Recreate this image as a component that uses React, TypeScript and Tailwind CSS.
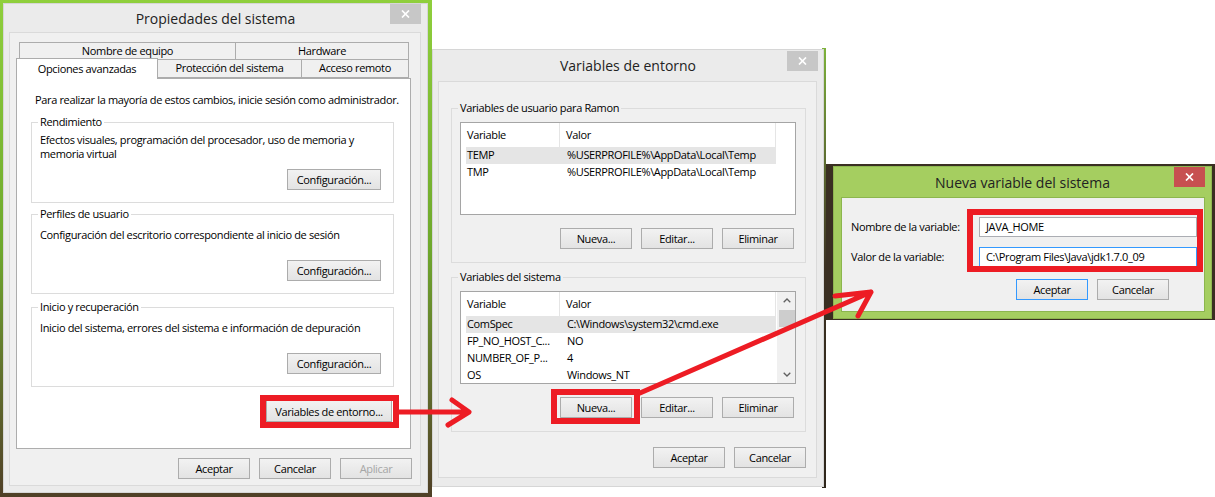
import React from "react";

type Kids = { children?: React.ReactNode };

function Btn({
  children,
  className = "",
  def = false,
  disabled = false,
}: Kids & { className?: string; def?: boolean; disabled?: boolean }) {
  return (
    <div
      className={`flex items-center justify-center border bg-linear-to-b from-[#f2f2f2] to-[#e3e3e3] text-[11px] leading-none ${
        def ? "border-[#3399ff]" : "border-[#acacac]"
      } ${disabled ? "text-[#a6a6a6]" : "text-black"} ${className}`}
    >
      {children}
    </div>
  );
}

function CloseX() {
  return (
    <svg width="9" height="8" viewBox="0 0 9 8">
      <path d="M1 0.5 L8 7.5 M8 0.5 L1 7.5" stroke="white" strokeWidth="1.7" />
    </svg>
  );
}

function Group({
  label,
  bg,
  className = "",
  children,
}: Kids & { label: string; bg: string; className?: string }) {
  return (
    <div className={`relative border border-[#dcdcdc] ${className}`}>
      <span className={`absolute left-[6px] top-[-9px] px-[2px] leading-[16px] ${bg}`}>{label}</span>
      {children}
    </div>
  );
}

function Chevron({ up }: { up?: boolean }) {
  return (
    <svg width="8" height="5" viewBox="0 0 8 5">
      <path
        d={up ? "M0.7 4.3 L4 1 L7.3 4.3" : "M0.7 0.7 L4 4 L7.3 0.7"}
        stroke="#606060"
        strokeWidth="1.3"
        fill="none"
      />
    </svg>
  );
}

function ListView({ rows, scroll = false }: { rows: [string, string][]; scroll?: boolean }) {
  return (
    <div className="flex h-[93px] w-[336px] overflow-hidden border border-[#a5a5a5] bg-white">
      <div className="flex-1 overflow-hidden">
        <div className="flex h-[24px] w-full">
          <div className="flex w-[99px] items-center border-r border-[#e5e5e5] pl-[6px]">Variable</div>
          <div className="flex w-[216px] items-center border-r border-[#e5e5e5] pl-[6px]">Valor</div>
        </div>
        {rows.map((r, i) => (
          <div
            key={r[0]}
            className={`ml-[5px] flex h-[17px] w-[310px] items-center whitespace-nowrap ${
              i === 0 ? "bg-[#e5e5e5]" : ""
            }`}
          >
            <span className="w-[101px] pl-[1px]">{r[0]}</span>
            <span>{r[1]}</span>
          </div>
        ))}
      </div>
      {scroll && (
        <div className="flex w-[18px] flex-col border-l border-[#f0f0f0] bg-[#f0f0f0]">
          <div className="flex h-[17px] items-center justify-center">
            <Chevron up />
          </div>
          <div className="ml-[1px] mt-px h-[17px] bg-[#cdcdcd]" />
          <div className="flex-1" />
          <div className="flex h-[17px] items-center justify-center">
            <Chevron />
          </div>
        </div>
      )}
    </div>
  );
}

function SystemProperties() {
  return (
    <div className="absolute left-[3px] top-[3px] flex h-[490px] w-[425px] flex-col border border-[#d6d6d6] bg-[#ebebeb]">
      <div className="relative flex h-[28px] shrink-0 items-center justify-center text-[14px] tracking-normal text-[#222]">
        Propiedades del sistema
        <div className="absolute right-[6px] top-0 flex h-[20px] w-[31px] items-center justify-center bg-[#c7c7c7]">
          <CloseX />
        </div>
      </div>
      <div className="mb-[6px] ml-[5px] mr-[6px] flex flex-1 flex-col border border-[#dadada] bg-[#f0f0f0]">
        <div className="ml-[6px] mt-[9px] w-[395px]">
          <div className="flex h-[18px] pl-[3px]">
            <div className="flex w-[217px] items-center justify-center border border-[#acacac] bg-[#f0f0f0]">
              Nombre de equipo
            </div>
            <div className="-ml-px flex w-[174px] items-center justify-center border border-[#acacac] bg-[#f0f0f0]">
              Hardware
            </div>
          </div>
          <div className="flex h-[18px] items-start">
            <div className="relative z-10 -mt-[2px] flex h-[21px] w-[142px] items-center justify-center border border-b-0 border-[#acacac] bg-white">
              Opciones avanzadas
            </div>
            <div className="-ml-px flex h-[18px] w-[145px] items-center justify-center border border-t-0 border-[#acacac] bg-[#f0f0f0]">
              Protección del sistema
            </div>
            <div className="-ml-px flex h-[18px] w-[108px] items-center justify-center border border-t-0 border-[#acacac] bg-[#f0f0f0]">
              Acceso remoto
            </div>
          </div>
          <div className="flex h-[371px] flex-col border border-[#adadad] bg-white">
            <div className="whitespace-nowrap pl-[18px] pt-[13px] leading-[15px]">
              Para realizar la mayoría de estos cambios, inicie sesión como administrador.
            </div>
            <Group label="Rendimiento" bg="bg-white" className="ml-[14px] mt-[15px] flex h-[81px] w-[363px] flex-col">
              <div className="pl-[8px] pt-[10px] leading-[14px]">
                Efectos visuales, programación del procesador, uso de memoria y
                <br />
                memoria virtual
              </div>
              <Btn className="mb-[12px] mr-[12px] mt-auto h-[21px] w-[94px] self-end">Configuración...</Btn>
            </Group>
            <Group label="Perfiles de usuario" bg="bg-white" className="ml-[14px] mt-[11px] flex h-[80px] w-[363px] flex-col">
              <div className="pl-[8px] pt-[12px] leading-[15px]">
                Configuración del escritorio correspondiente al inicio de sesión
              </div>
              <Btn className="mb-[12px] mr-[12px] mt-auto h-[21px] w-[94px] self-end">Configuración...</Btn>
            </Group>
            <Group label="Inicio y recuperación" bg="bg-white" className="ml-[14px] mt-[13px] flex h-[80px] w-[363px] flex-col">
              <div className="pl-[8px] pt-[12px] leading-[15px]">
                Inicio del sistema, errores del sistema e información de depuración
              </div>
              <Btn className="mb-[12px] mr-[12px] mt-auto h-[21px] w-[94px] self-end">Configuración...</Btn>
            </Group>
            <Btn className="mr-[18px] mt-[13px] h-[22px] w-[126px] self-end">Variables de entorno...</Btn>
          </div>
        </div>
        <div className="mr-[8px] mt-[9px] flex justify-end gap-[9px]">
          <Btn className="h-[21px] w-[72px]">Aceptar</Btn>
          <Btn className="h-[21px] w-[72px]">Cancelar</Btn>
          <Btn className="h-[21px] w-[72px]" disabled>
            Aplicar
          </Btn>
        </div>
      </div>
    </div>
  );
}

function EnvButtons() {
  return (
    <div className="mr-[2px] mt-[13px] flex justify-end gap-[9px]">
      <Btn className="h-[21px] w-[72px]">Nueva...</Btn>
      <Btn className="h-[21px] w-[72px]">Editar...</Btn>
      <Btn className="h-[21px] w-[72px]">Eliminar</Btn>
    </div>
  );
}

function EnvVariables() {
  return (
    <div className="absolute left-[432px] top-[49px] flex h-[438px] w-[392px] flex-col border border-[#d6d6d6] bg-[#ebebeb]">
      <div className="relative flex h-[31px] shrink-0 items-center justify-center text-[14px] tracking-normal text-[#222]">
        Variables de entorno
        <div className="absolute right-[5px] top-[1px] flex h-[20px] w-[31px] items-center justify-center bg-[#c7c7c7]">
          <CloseX />
        </div>
      </div>
      <div className="mb-[8px] ml-[5px] mr-[6px] flex flex-1 flex-col border border-[#dadada] bg-[#f0f0f0]">
        <Group
          label="Variables de usuario para Ramon"
          bg="bg-[#f0f0f0]"
          className="ml-[12px] mt-[26px] h-[155px] w-[355px] pl-[8px] pr-[9px] pt-[13px]"
        >
          <ListView
            rows={[
              ["TEMP", "%USERPROFILE%\\AppData\\Local\\Temp"],
              ["TMP", "%USERPROFILE%\\AppData\\Local\\Temp"],
            ]}
          />
          <EnvButtons />
        </Group>
        <Group
          label="Variables del sistema"
          bg="bg-[#f0f0f0]"
          className="ml-[12px] mt-[14px] h-[155px] w-[355px] pl-[8px] pr-[9px] pt-[13px]"
        >
          <ListView
            scroll
            rows={[
              ["ComSpec", "C:\\Windows\\system32\\cmd.exe"],
              ["FP_NO_HOST_C...", "NO"],
              ["NUMBER_OF_P...", "4"],
              ["OS", "Windows_NT"],
            ]}
          />
          <EnvButtons />
        </Group>
        <div className="mr-[10px] mt-[15px] flex justify-end gap-[9px]">
          <Btn className="h-[21px] w-[72px]">Aceptar</Btn>
          <Btn className="h-[21px] w-[72px]">Cancelar</Btn>
        </div>
      </div>
    </div>
  );
}

function NewVariable() {
  return (
    <div className="absolute left-[833px] top-[166px] flex h-[153px] w-[379px] flex-col border border-[#8fb650] bg-[#a5ce60]">
      <div className="relative flex h-[30px] shrink-0 items-center justify-center text-[14px] tracking-normal text-[#222]">
        Nueva variable del sistema
        <div className="absolute right-[6px] top-0 flex h-[20px] w-[31px] items-center justify-center bg-[#c75050]">
          <CloseX />
        </div>
      </div>
      <div className="mb-[6px] ml-[7px] mr-[6px] flex flex-1 flex-col border border-[#8cb64e] bg-[#f0f0f0] pl-[9px] pt-[19px]">
        <div className="flex h-[20px] items-center">
          <span className="w-[128px]">Nombre de la variable:</span>
          <div className="flex h-[20px] w-[218px] items-center border border-[#abadb3] bg-white pl-[6px]">JAVA_HOME</div>
        </div>
        <div className="mt-[10px] flex h-[20px] items-center">
          <span className="w-[128px]">Valor de la variable:</span>
          <div className="flex h-[20px] w-[218px] items-center border border-[#3399ff] bg-white pl-[6px]">
            C:\Program Files\Java\jdk1.7.0_09
          </div>
        </div>
        <div className="ml-[165px] mt-[12px] flex gap-[9px]">
          <Btn def className="h-[21px] w-[72px]">
            Aceptar
          </Btn>
          <Btn className="h-[21px] w-[72px]">Cancelar</Btn>
        </div>
      </div>
    </div>
  );
}

export default function App() {
  return (
    <div className="relative h-[497px] w-[1215px] overflow-hidden bg-white font-['Open_Sans',sans-serif] text-[11px] tracking-[-0.35px] text-black">
      {/* desktop behind each screenshot */}
      <div className="absolute left-0 top-0 h-[497px] w-[432px] bg-linear-to-b from-[#8fcf3c] via-[#6ea82c] to-[#4f3f26]" />
      <div className="absolute left-[822px] top-[48px] h-[440px] w-[4px] bg-linear-to-b from-[#7db23a] via-[#3c3122] to-[#2e261b]" />
      <div className="absolute left-[826px] top-[164px] h-[156px] w-[389px] bg-[#3a2f22]" />

      <SystemProperties />
      <EnvVariables />
      <NewVariable />

      {/* highlights */}
      <div className="absolute left-[260px] top-[395px] h-[33px] w-[139px] border-[6px] border-[#ed1c24]" />
      <div className="absolute left-[551px] top-[389px] h-[35px] w-[89px] border-[6px] border-[#ed1c24]" />
      <div className="absolute left-[967px] top-[209px] h-[63px] w-[236px] border-[6px] border-[#ed1c24]" />
      <svg className="pointer-events-none absolute inset-0" width="1215" height="497">
        <g stroke="#ed1c24" strokeWidth="5" fill="none" strokeLinecap="round" strokeLinejoin="round">
          <path d="M399 412 L468 412 M452 400 L469 412 L448 425" />
          <path d="M640 393 L871 292 M835 296 L871 292 L858 316" />
        </g>
      </svg>
    </div>
  );
}
